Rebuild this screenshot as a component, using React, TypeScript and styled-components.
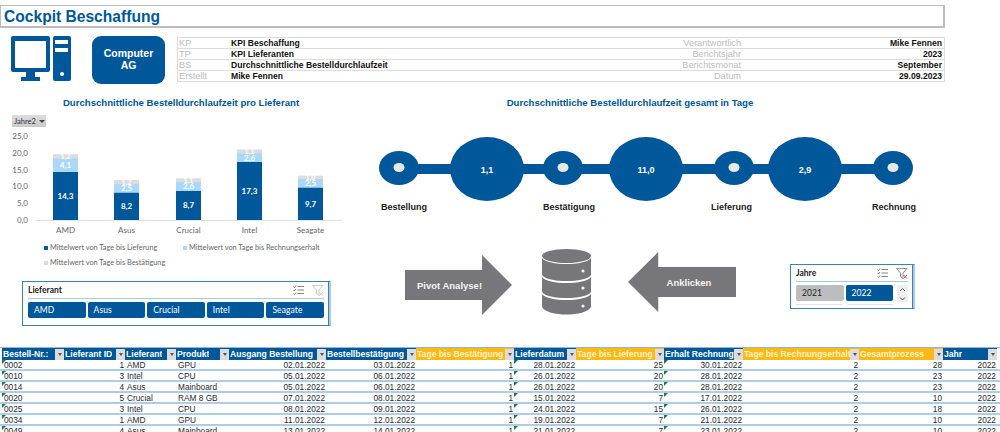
import React from 'react';
import styled, { createGlobalStyle } from 'styled-components';

const BLUE = '#00589b';
const ORANGE = '#fdb913';
const GRAY = '#77767b';

const GlobalStyle = createGlobalStyle`
  html, body { margin: 0; padding: 0; background: #fff; }
  body { font-family: "Liberation Sans", Arial, sans-serif; }
`;

const Page = styled.div`
  width: 1000px;
  height: 432px;
  overflow: hidden;
  padding-top: 5px;
  box-sizing: border-box;
`;

const TitleBar = styled.h1`
  box-sizing: border-box;
  width: 945px;
  height: 23px;
  margin: 0;
  padding-left: 3px;
  border: 1px solid #bdbdbd;
  border-right-width: 2px;
  border-bottom-width: 2px;
  font-size: 15.6px;
  line-height: 22px;
  color: ${BLUE};
`;

const HeaderRow = styled.div`
  display: flex;
  align-items: flex-start;
  height: 48px;
  margin-top: 8px;
  padding-left: 11px;
`;

const CompanyBox = styled.div`
  display: flex;
  align-items: center;
  justify-content: center;
  box-sizing: border-box;
  width: 73px;
  height: 48px;
  margin-left: 21px;
  padding-bottom: 2px;
  border-radius: 9px;
  background: ${BLUE};
  color: #fff;
  font-size: 10.5px;
  font-weight: bold;
  line-height: 12px;
  text-align: center;
`;

const InfoGrid = styled.div`
  display: grid;
  grid-template-columns: 52px 411px 102px 1fr;
  grid-auto-rows: 11px;
  box-sizing: border-box;
  width: 768px;
  margin: 1px 0 0 12px;
  border: 1px solid #dcdcdc;
  border-bottom-width: 0;
`;

const InfoCell = styled.div<{ $muted?: boolean; $right?: boolean }>`
  padding: 0 2px 0 1px;
  border-bottom: 1px solid #dcdcdc;
  font-size: ${p => (p.$muted ? '9.2px' : '8.6px')};
  line-height: 11px;
  white-space: nowrap;
  font-weight: ${p => (p.$muted ? 'normal' : 'bold')};
  color: ${p => (p.$muted ? '#bcbcbc' : '#111')};
  text-align: ${p => (p.$right ? 'right' : 'left')};
`;

const Main = styled.div`
  display: flex;
  height: 251px;
  margin-top: 12px;
`;

const LeftCol = styled.section`
  width: 370px;
  flex: none;
`;

const RightCol = styled.section`
  flex: 1;
`;

const ChartTitle = styled.h2<{ $width: number }>`
  width: ${p => p.$width}px;
  margin: 0;
  font-size: 9.6px;
  line-height: 14px;
  text-align: center;
  color: ${BLUE};
`;

const FieldButton = styled.div`
  display: flex;
  align-items: center;
  gap: 3px;
  box-sizing: border-box;
  width: 34px;
  height: 12px;
  margin: 5px 0 0 12px;
  padding-left: 2px;
  background: linear-gradient(#dedede, #c9c9c9);
  font-family: Lato, sans-serif;
  font-size: 7.5px;
  color: #333;
`;

const Caret = styled.span`
  width: 0;
  height: 0;
  border-left: 3px solid transparent;
  border-right: 3px solid transparent;
  border-top: 3px solid #444;
`;

const ChartSvg = styled.svg`
  display: block;
  width: 335px;
  height: 109px;
  margin-left: 12px;
`;

const Legend = styled.div`
  display: grid;
  grid-template-columns: 139px auto;
  grid-auto-rows: 15px;
  margin: 4px 0 0 44px;
  font-family: Lato, sans-serif;
  font-size: 7.35px;
  line-height: 15px;
  color: #666;
`;

const LegendItem = styled.div`
  display: flex;
  align-items: center;
  gap: 2px;
  white-space: nowrap;
`;

const Swatch = styled.i<{ $color: string }>`
  width: 4px;
  height: 4px;
  background: ${p => p.$color};
`;

const LieferantWrap = styled.div`
  margin: 11px 0 0 22px;
`;

const Slicer = styled.div<{ $width: number }>`
  box-sizing: border-box;
  width: ${p => p.$width}px;
  height: 45px;
  padding: 0 5px;
  border: 1px solid #3d80b5;
  border-right: 2px solid #a9c9e4;
  box-shadow: inset -1px 0 0 #3d80b5;
  font-family: Lato, sans-serif;
`;

const SlicerHead = styled.div`
  display: flex;
  align-items: center;
  justify-content: space-between;
  height: 16px;
  border-bottom: 1px solid #a6cbe8;
  font-size: 8.5px;
  font-weight: bold;
  color: #222;
`;

const SlicerIcons = styled.div`
  display: flex;
  align-items: center;
  gap: 8px;
`;

const SlicerButtons = styled.div`
  display: flex;
  gap: 2px;
  margin-top: 3px;
`;

const SlicerButton = styled.div<{ $off?: boolean; $width: number }>`
  box-sizing: border-box;
  width: ${p => p.$width}px;
  height: 16px;
  padding-left: 6px;
  border-radius: 2px;
  background: ${p => (p.$off ? '#bdbdbd' : BLUE)};
  color: ${p => (p.$off ? '#222' : '#fff')};
  font-size: 8.5px;
  letter-spacing: 0.1px;
  line-height: 16px;
`;

const Scroller = styled.div`
  display: flex;
  flex-direction: column;
  gap: 1px;
  margin-left: 2px;
`;

const ScrollStep = styled.div`
  display: flex;
  align-items: center;
  justify-content: center;
  width: 11px;
  height: 8px;
  background: #efefef;
`;

const TimelineSvg = styled.svg`
  display: block;
  width: 575px;
  height: 105px;
  margin-top: 5px;
`;

const Process = styled.div`
  display: flex;
  align-items: flex-start;
  padding-left: 35px;
  margin-top: 29px;
`;

const Arrow = styled.div<{ $left?: boolean }>`
  display: flex;
  align-items: center;
  justify-content: center;
  box-sizing: border-box;
  width: ${p => (p.$left ? '108px' : '107px')};
  height: 60px;
  margin-top: ${p => (p.$left ? '3px' : '6px')};
  margin-left: ${p => (p.$left ? '37px' : '0')};
  padding: ${p => (p.$left ? '0 0 0 14px' : '0 18px 0 0')};
  background: ${GRAY};
  clip-path: ${p =>
    p.$left
      ? 'polygon(0 50%, 28% 0, 28% 25%, 100% 25%, 100% 75%, 28% 75%, 28% 100%)'
      : 'polygon(0 25%, 72% 25%, 72% 0, 100% 50%, 72% 100%, 72% 75%, 0 75%)'};
  color: #f4f4f4;
  font-size: 9.5px;
  font-weight: bold;
  white-space: nowrap;
`;

const DatabaseIcon = styled.svg`
  flex: none;
  width: 49px;
  height: 66px;
  margin-left: 30px;
`;

const YearSlicer = styled(Slicer)`
  margin: 15px 0 0 54px;
`;

const Shadow = styled.div`
  display: flex;
  gap: 5px;
  margin-top: 2px;
`;

const ShadowLine = styled.i`
  width: 46px;
  height: 1px;
  background: #e4e4e4;
`;

const COLS = '2px 62px 61px 51px 53px 97px 90px 98px 62px 88px 79px 116px 84px 54px';

const Table = styled.div`
  width: 1000px;
  border-top: 1px solid #8fb8da;
`;

const HeadRow = styled.div`
  display: grid;
  grid-template-columns: ${COLS};
  height: 12px;
  font-size: 8.6px;
`;

const HeadCell = styled.div<{ $accent?: boolean }>`
  display: flex;
  align-items: center;
  justify-content: space-between;
  min-width: 0;
  padding-left: 1px;
  background: ${p => (p.$accent ? ORANGE : BLUE)};
  color: ${p => (p.$accent ? '#fff3cf' : '#fff')};
  font-weight: bold;
`;

const HeadLabel = styled.span`
  overflow: hidden;
  white-space: nowrap;
`;

const FilterBtn = styled.span`
  display: flex;
  align-items: center;
  justify-content: center;
  flex: none;
  width: 9px;
  height: 11px;
  background: #dcdcdc;
`;

const FilterCaret = styled.i`
  border-left: 2.5px solid transparent;
  border-right: 2.5px solid transparent;
  border-top: 3px solid #555;
`;

const Row = styled.div`
  display: grid;
  grid-template-columns: ${COLS};
  box-sizing: border-box;
  height: 11px;
  border-bottom: 2px solid #afcce5;
  font-size: 8.3px;
  color: #2a2a2a;
`;

const Cell = styled.div<{ $right?: boolean; $flag?: boolean }>`
  position: relative;
  overflow: hidden;
  padding: 0 ${p => (p.$right ? '1px' : '0')} 0 ${p => (p.$right ? '1px' : '2px')};
  line-height: 10px;
  white-space: nowrap;
  text-align: ${p => (p.$right ? 'right' : 'left')};
  &::before {
    content: '';
    display: ${p => (p.$flag ? 'block' : 'none')};
    position: absolute;
    top: 0;
    left: 0;
    border-top: 4px solid #14803a;
    border-right: 4px solid transparent;
  }
`;

type Column = { title: string; accent?: boolean; right?: boolean; flag?: boolean };

const columns: Column[] = [
  { title: 'Bestell-Nr.:', flag: true },
  { title: 'Lieferant ID', right: true },
  { title: 'Lieferant' },
  { title: 'Produkt' },
  { title: 'Ausgang Bestellung', right: true },
  { title: 'Bestellbestätigung', right: true },
  { title: 'Tage bis Bestätigung', accent: true, right: true },
  { title: 'Lieferdatum', right: true, flag: true },
  { title: 'Tage bis Lieferung', accent: true, right: true },
  { title: 'Erhalt Rechnung', right: true, flag: true },
  { title: 'Tage bis Rechnungserhalt', accent: true, right: true },
  { title: 'Gesamtprozess', accent: true, right: true },
  { title: 'Jahr', right: true },
];

const rows = [
  ['0002', '1', 'AMD', 'GPU', '02.01.2022', '03.01.2022', '1', '28.01.2022', '25', '30.01.2022', '2', '28', '2022'],
  ['0010', '3', 'Intel', 'CPU', '05.01.2022', '06.01.2022', '1', '26.01.2022', '20', '28.01.2022', '2', '23', '2022'],
  ['0014', '4', 'Asus', 'Mainboard', '05.01.2022', '06.01.2022', '1', '26.01.2022', '20', '28.01.2022', '2', '23', '2022'],
  ['0020', '5', 'Crucial', 'RAM 8 GB', '07.01.2022', '08.01.2022', '1', '15.01.2022', '7', '17.01.2022', '2', '10', '2022'],
  ['0025', '3', 'Intel', 'CPU', '08.01.2022', '09.01.2022', '1', '24.01.2022', '15', '26.01.2022', '2', '18', '2022'],
  ['0034', '1', 'AMD', 'GPU', '11.01.2022', '12.01.2022', '1', '19.01.2022', '7', '21.01.2022', '2', '10', '2022'],
  ['0049', '4', 'Asus', 'Mainboard', '13.01.2022', '14.01.2022', '1', '21.01.2022', '7', '23.01.2022', '2', '10', '2022'],
];

const info = [
  ['KP', 'KPI Beschaffung', 'Verantwortlich', 'Mike Fennen'],
  ['TP', 'KPI Lieferanten', 'Berichtsjahr', '2023'],
  ['BS', 'Durchschnittliche Bestelldurchlaufzeit', 'Berichtsmonat', 'September'],
  ['Erstellt', 'Mike Fennen', 'Datum', '29.09.2023'],
];

const bars = [
  { name: 'AMD', x: 53, w: 25, a: 14.3, b: 4.1, c: 1.2 },
  { name: 'Asus', x: 114, w: 25, a: 8.2, b: 2.5, c: 1.2 },
  { name: 'Crucial', x: 176, w: 25, a: 8.7, b: 2.6, c: 1.1 },
  { name: 'Intel', x: 237, w: 25, a: 17.3, b: 2.6, c: 1.1 },
  { name: 'Seagate', x: 298, w: 25, a: 9.7, b: 2.5, c: 1.0 },
];

const fmt = (v: number) => v.toFixed(1).replace('.', ',');

const Chart = () => {
  const base = 220;
  const k = 3.36;
  return (
    <ChartSvg viewBox="12 127 335 109" fontFamily="Lato, sans-serif" fontSize="8">
      <line x1="35" x2="342" y1={base + 0.5} y2={base + 0.5} stroke="#e2e2e2" />
      {[0, 5, 10, 15, 20, 25].map(v => (
        <text key={v} x="28" y={base + 3 - v * k} textAnchor="end" fill="#666">
          {fmt(v)}
        </text>
      ))}
      {bars.map(b => {
        const h1 = b.a * k;
        const h2 = b.b * k;
        const h3 = b.c * k;
        const cx = b.x + b.w / 2;
        return (
          <g key={b.name}>
            <rect x={b.x} y={base - h1} width={b.w} height={h1} fill={BLUE} />
            <rect x={b.x} y={base - h1 - h2} width={b.w} height={h2} fill="#a9d8fb" />
            <rect x={b.x} y={base - h1 - h2 - h3} width={b.w} height={h3} fill="#dcdcdc" />
            <text x={cx} y={base - h1 / 2 + 3} textAnchor="middle" fill="#fff" fontWeight="bold">
              {fmt(b.a)}
            </text>
            <text x={cx} y={base - h1 - h2 / 2 + 3} textAnchor="middle" fill="#fff" fontWeight="bold">
              {fmt(b.b)}
            </text>
            <text x={cx} y={base - h1 - h2 - h3 / 2 + 2.5} textAnchor="middle" fill="#fff" fontWeight="bold" fontSize="7">
              {fmt(b.c)}
            </text>
            <text x={cx} y="233" textAnchor="middle" fill="#666">
              {b.name}
            </text>
          </g>
        );
      })}
    </ChartSvg>
  );
};

const Timeline = () => {
  const small = [
    { x: 399, label: 'Bestellung', lx: 381 },
    { x: 563, label: 'Bestätigung', lx: 543 },
    { x: 734, label: 'Lieferung', lx: 711 },
    { x: 893, label: 'Rechnung', lx: 872 },
  ];
  const big = [
    { x: 487, label: '1,1' },
    { x: 646, label: '11,0' },
    { x: 805, label: '2,9' },
  ];
  return (
    <TimelineSvg viewBox="370 115 575 105" fontSize="9" fontWeight="bold">
      <rect x="399" y="164" width="494" height="10" fill={BLUE} />
      {small.map(s => (
        <g key={s.label}>
          <ellipse cx={s.x} cy="168" rx="20" ry="17" fill={BLUE} />
          <ellipse cx={s.x} cy="167.5" rx="5.5" ry="4.5" fill="#e9e9e4" />
          <text x={s.lx} y="210" fill="#222">
            {s.label}
          </text>
        </g>
      ))}
      {big.map(b => (
        <g key={b.label}>
          <ellipse cx={b.x} cy="169" rx="37" ry="32" fill={BLUE} />
          <text x={b.x} y="173" textAnchor="middle" fill="#fff">
            {b.label}
          </text>
        </g>
      ))}
    </TimelineSvg>
  );
};

const MultiSelectIcon = () => (
  <svg width="11" height="10" viewBox="0 0 11 10" fill="none" stroke="#666" strokeWidth="0.8">
    <path d="M0.5 1.5l1 1 1.5-2M0.5 5l1 1 1.5-2M0.5 8.5l1 1 1.5-2" />
    <path d="M4.5 1.5H11M4.5 5H11M4.5 8.5H11" />
  </svg>
);

const ClearFilterIcon = ({ active }: { active?: boolean }) => (
  <svg width="12" height="11" viewBox="0 0 12 11" fill="none">
    <path d="M0.5 0.5H11L7 5V10.5L4.5 8.5V5Z" stroke={active ? '#777' : '#bdbdbd'} strokeWidth="0.8" />
    <path d="M7.5 7l3.5 3.5M11 7l-3.5 3.5" stroke={active ? '#e2443c' : '#c9c9c9'} strokeWidth="1" />
  </svg>
);

const ComputerIcon = () => (
  <svg width="60" height="46" viewBox="11 37 60 46">
    <path
      fill={BLUE}
      fillRule="evenodd"
      d="M13 37H48a2 2 0 0 1 2 2V71a2 2 0 0 1-2 2H35V78H40V82H21V78H26V73H13a2 2 0 0 1-2-2V39a2 2 0 0 1 2-2ZM15 42V69H46V42Z"
    />
    <path
      fill={BLUE}
      fillRule="evenodd"
      d="M55 37H69a2 2 0 0 1 2 2V80a2 2 0 0 1-2 2H55a2 2 0 0 1-2-2V39a2 2 0 0 1 2-2ZM55 41V45H68V41ZM55 49V53H68V49ZM62 73a2 2 0 1 0 0 4a2 2 0 1 0 0-4Z"
    />
  </svg>
);

const Database = () => (
  <DatabaseIcon viewBox="0 0 49 66">
    <g fill={GRAY}>
      <ellipse cx="24.5" cy="7" rx="24.5" ry="7" />
      <path d="M0 9C6 17 43 17 49 9V26C44 34 5 34 0 26Z" />
      <path d="M0 28C6 36 43 36 49 28V43C44 51 5 51 0 43Z" />
      <path d="M0 45C6 53 43 53 49 45V58C44 68 5 68 0 58Z" />
    </g>
    <g fill="#f4f4f4">
      <circle cx="41" cy="22" r="1.6" />
      <circle cx="41" cy="39" r="1.6" />
      <circle cx="41" cy="57" r="1.6" />
    </g>
  </DatabaseIcon>
);

const ScrollChevron = ({ d }: { d: string }) => (
  <svg width="7" height="5" viewBox="0 0 7 5" fill="none" stroke="#555" strokeWidth="1">
    <path d={d} />
  </svg>
);

export default function App() {
  return (
    <Page>
      <GlobalStyle />
      <TitleBar>Cockpit Beschaffung</TitleBar>

      <HeaderRow>
        <ComputerIcon />
        <CompanyBox>
          Computer
          <br />
          AG
        </CompanyBox>
        <InfoGrid>
          {info.map(r => (
            <React.Fragment key={r[0]}>
              <InfoCell $muted>{r[0]}</InfoCell>
              <InfoCell>{r[1]}</InfoCell>
              <InfoCell $muted $right>
                {r[2]}
              </InfoCell>
              <InfoCell $right>{r[3]}</InfoCell>
            </React.Fragment>
          ))}
        </InfoGrid>
      </HeaderRow>

      <Main>
        <LeftCol>
          <ChartTitle $width={362}>Durchschnittliche Bestelldurchlaufzeit pro Lieferant</ChartTitle>
          <FieldButton>
            Jahre2 <Caret />
          </FieldButton>
          <Chart />
          <Legend>
            <LegendItem>
              <Swatch $color={BLUE} />
              Mittelwert von Tage bis Lieferung
            </LegendItem>
            <LegendItem>
              <Swatch $color="#a9d8fb" />
              Mittelwert von Tage bis Rechnungserhalt
            </LegendItem>
            <LegendItem>
              <Swatch $color="#dcdcdc" />
              Mittelwert von Tage bis Bestätigung
            </LegendItem>
          </Legend>
          <LieferantWrap>
            <Slicer $width={309}>
              <SlicerHead>
                Lieferant
                <SlicerIcons>
                  <MultiSelectIcon />
                  <ClearFilterIcon />
                </SlicerIcons>
              </SlicerHead>
              <SlicerButtons>
                {['AMD', 'Asus', 'Crucial', 'Intel', 'Seagate'].map(n => (
                  <SlicerButton key={n} $width={58}>
                    {n}
                  </SlicerButton>
                ))}
              </SlicerButtons>
            </Slicer>
          </LieferantWrap>
        </LeftCol>

        <RightCol>
          <ChartTitle $width={520}>Durchschnittliche Bestelldurchlaufzeit gesamt in Tage</ChartTitle>
          <Timeline />
          <Process>
            <Arrow>Pivot Analyse!</Arrow>
            <Database />
            <Arrow $left>Anklicken</Arrow>
            <YearSlicer $width={125}>
              <SlicerHead>
                Jahre
                <SlicerIcons>
                  <MultiSelectIcon />
                  <ClearFilterIcon active />
                </SlicerIcons>
              </SlicerHead>
              <SlicerButtons>
                <SlicerButton $off $width={48}>
                  2021
                </SlicerButton>
                <SlicerButton $width={48}>2022</SlicerButton>
                <Scroller>
                  <ScrollStep>
                    <ScrollChevron d="M1 4l2.5-2.5L6 4" />
                  </ScrollStep>
                  <ScrollStep>
                    <ScrollChevron d="M1 1.5L3.5 4L6 1.5" />
                  </ScrollStep>
                </Scroller>
              </SlicerButtons>
              <Shadow>
                <ShadowLine />
                <ShadowLine />
              </Shadow>
            </YearSlicer>
          </Process>
        </RightCol>
      </Main>

      <Table>
        <HeadRow>
          <span />
          {columns.map(c => (
            <HeadCell key={c.title} $accent={c.accent}>
              <HeadLabel>{c.title}</HeadLabel>
              <FilterBtn>
                <FilterCaret />
              </FilterBtn>
            </HeadCell>
          ))}
        </HeadRow>
        {rows.map(r => (
          <Row key={r[0]}>
            <span />
            {r.map((v, i) => (
              <Cell key={i} $right={columns[i].right} $flag={columns[i].flag}>
                {v}
              </Cell>
            ))}
          </Row>
        ))}
      </Table>
    </Page>
  );
}
